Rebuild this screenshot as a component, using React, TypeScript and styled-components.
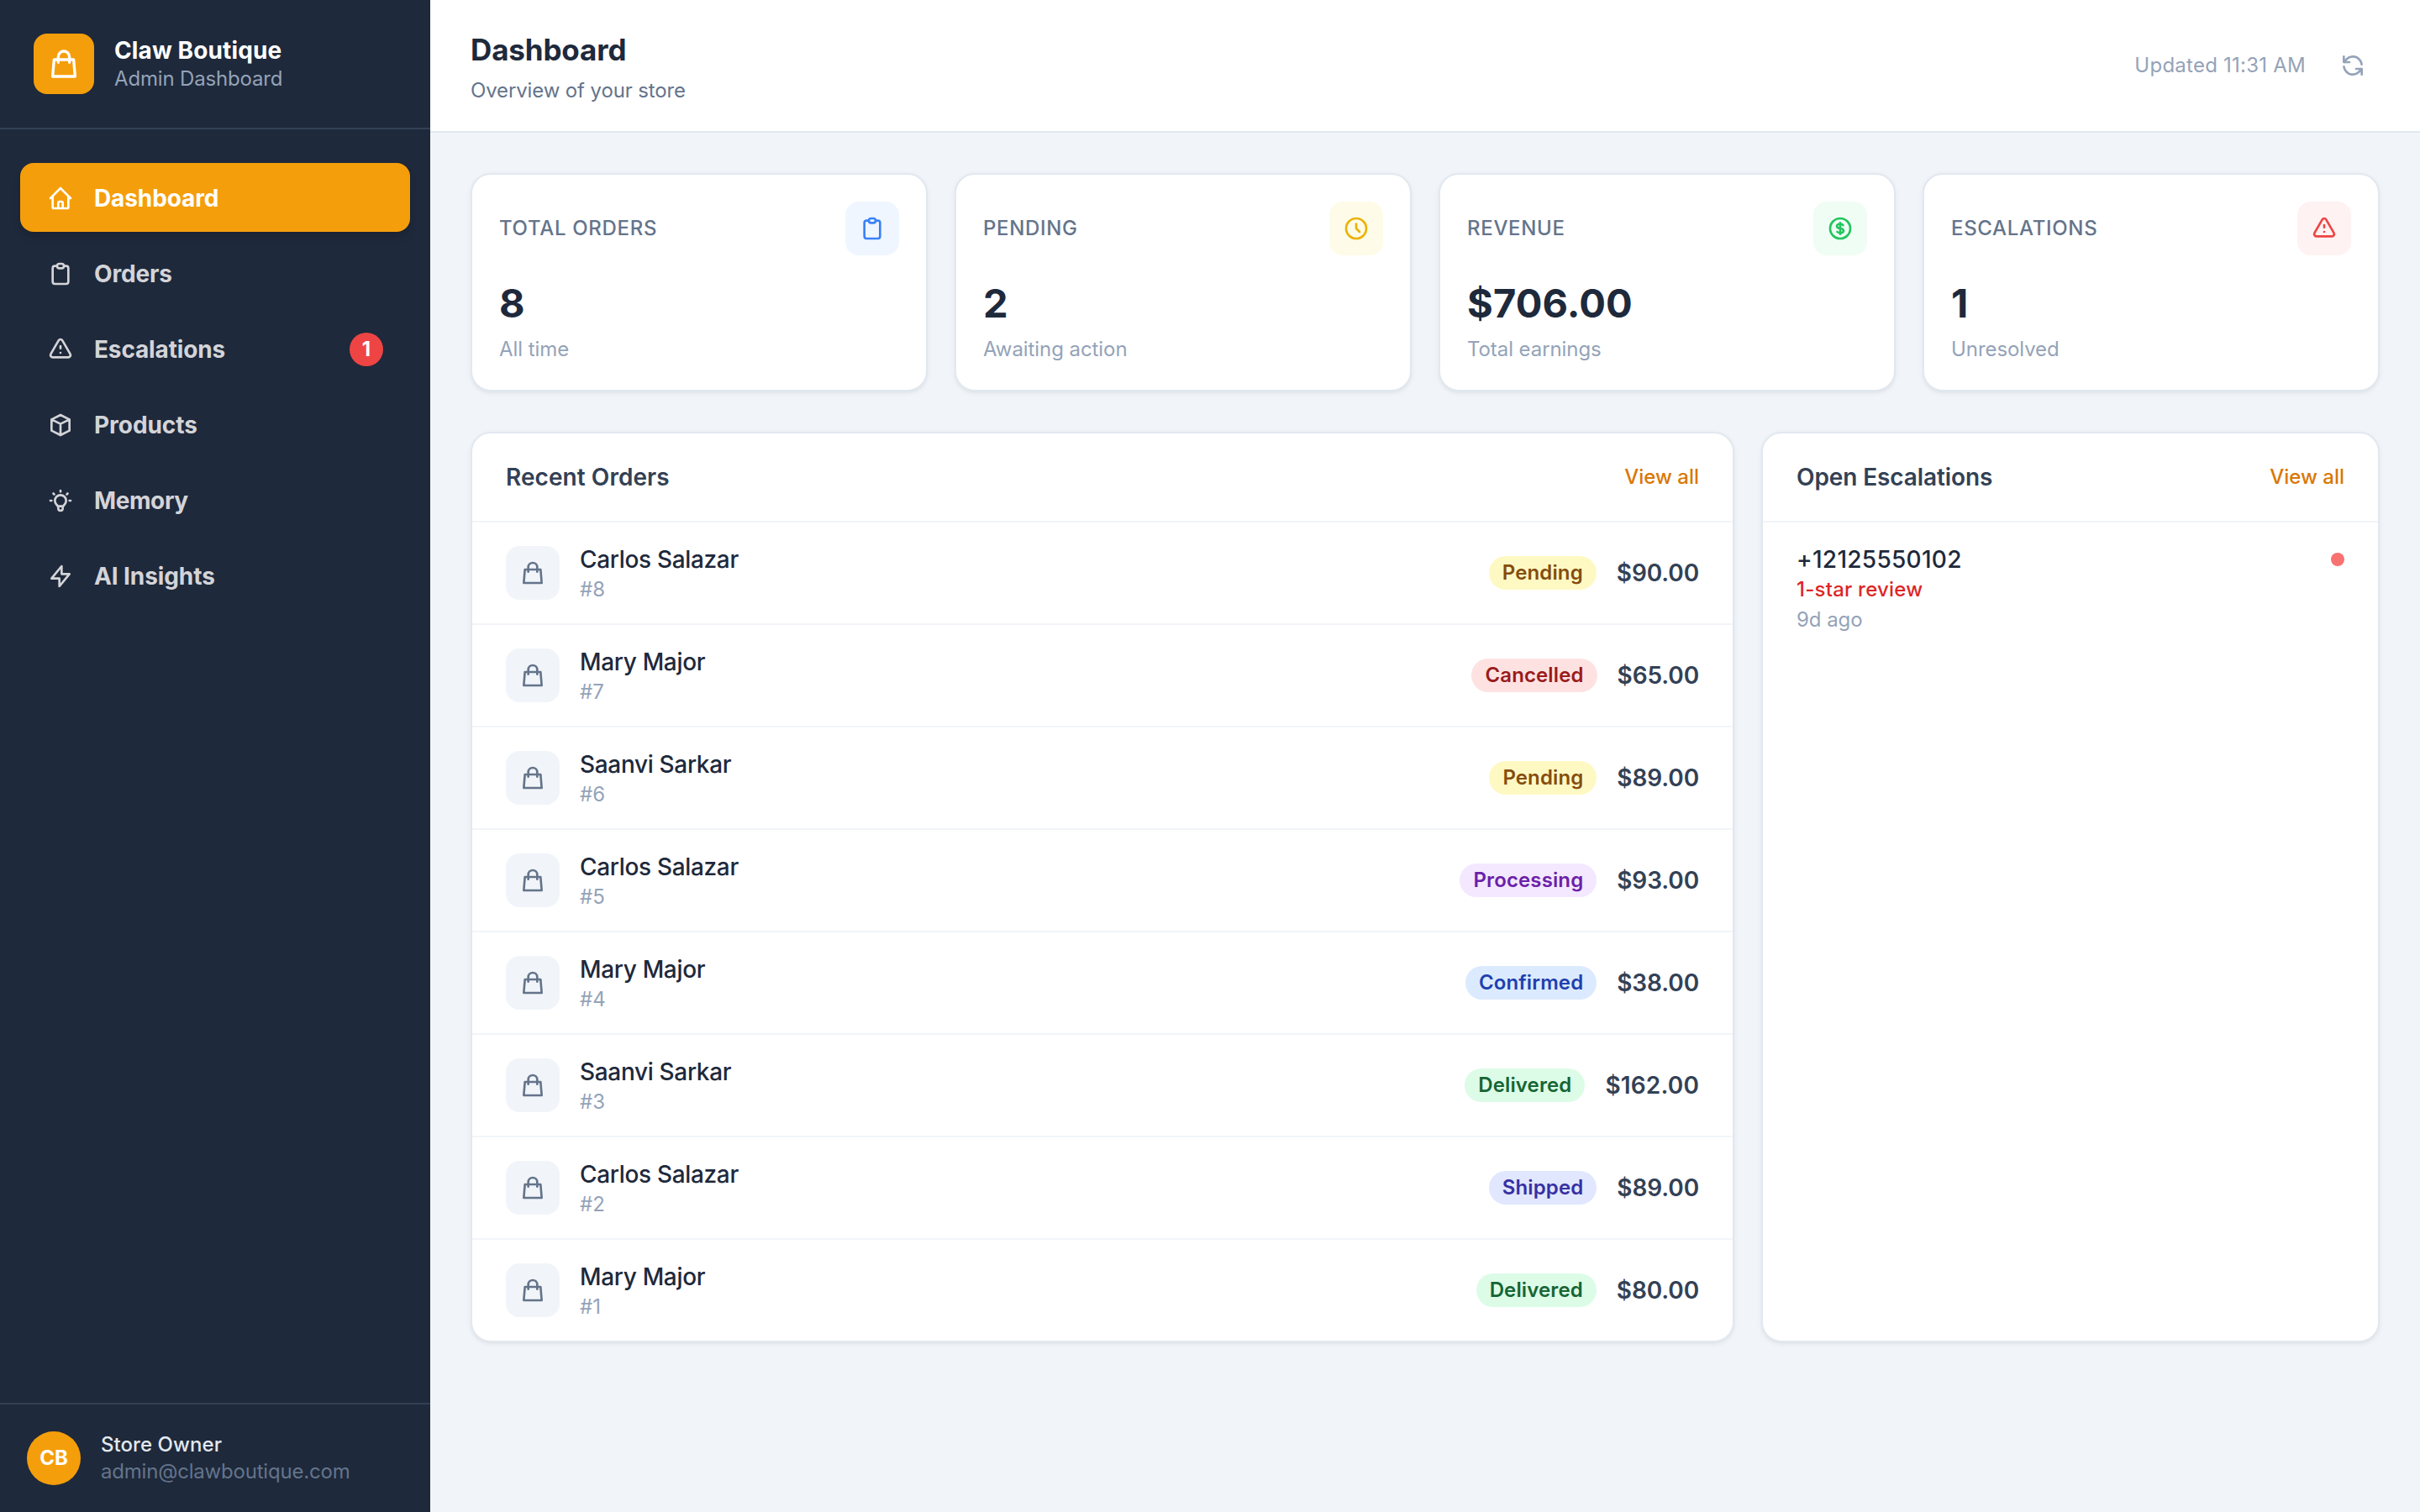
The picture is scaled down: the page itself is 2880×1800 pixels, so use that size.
import React from 'react';
import styled, { createGlobalStyle } from 'styled-components';

const GlobalStyle = createGlobalStyle`
  *, *::before, *::after { box-sizing: border-box; }
  body {
    margin: 0;
    background: #f1f5f9;
    color: #1e293b;
    font-family: Inter, "Liberation Sans", sans-serif;
    -webkit-font-smoothing: antialiased;
  }
  h1, h2, p { margin: 0; }
`;

/* ---------- icons ---------- */

const iconPaths = {
  bag: 'M16 11V7a4 4 0 00-8 0v4M5 9h14l1 12H4L5 9z',
  home: 'M3 12l2-2m0 0l7-7 7 7M5 10v10a1 1 0 001 1h3m10-11l2 2m-2-2v10a1 1 0 01-1 1h-3m-6 0a1 1 0 001-1v-4a1 1 0 011-1h2a1 1 0 011 1v4a1 1 0 001 1m-6 0h6',
  clipboard:
    'M9 5H7a2 2 0 00-2 2v12a2 2 0 002 2h10a2 2 0 002-2V7a2 2 0 00-2-2h-2M9 5a2 2 0 002 2h2a2 2 0 002-2M9 5a2 2 0 012-2h2a2 2 0 012 2',
  warning:
    'M12 9v2m0 4h.01m-6.938 4h13.856c1.54 0 2.502-1.667 1.732-3L13.732 4c-.77-1.333-2.694-1.333-3.464 0L3.34 16c-.77 1.333.192 3 1.732 3z',
  cube: 'M20 7l-8-4-8 4m16 0l-8 4m8-4v10l-8 4m0-10L4 7m8 4v10M4 7v10l8 4',
  bulb: 'M9.663 17h4.673M12 3v1m6.364 1.636l-.707.707M21 12h-1M4 12H3m3.343-5.657l-.707-.707m2.828 9.9a5 5 0 117.072 0l-.548.547A3.374 3.374 0 0014 18.469V19a2 2 0 11-4 0v-.531c0-.895-.356-1.754-.988-2.386l-.548-.547z',
  bolt: 'M13 10V3L4 14h7v7l9-11h-7z',
  clock: 'M12 8v4l3 3m6-3a9 9 0 11-18 0 9 9 0 0118 0z',
  dollar:
    'M12 8c-1.657 0-3 .895-3 2s1.343 2 3 2 3 .895 3 2-1.343 2-3 2m0-8c1.11 0 2.08.402 2.599 1M12 8V7m0 1v8m0 0v1m0-1c-1.11 0-2.08-.402-2.599-1M21 12a9 9 0 11-18 0 9 9 0 0118 0z',
  refresh:
    'M4 4v5h.582m15.356 2A8.001 8.001 0 004.582 9m0 0H9m11 11v-5h-.581m0 0a8.003 8.003 0 01-15.357-2m15.357 2H15',
};

type IconName = keyof typeof iconPaths;

const Svg = styled.svg<{ $size: number }>`
  display: block;
  flex: none;
  width: ${(p) => p.$size}px;
  height: ${(p) => p.$size}px;
  fill: none;
  stroke: currentColor;
  stroke-width: 2;
  stroke-linecap: round;
  stroke-linejoin: round;
`;

const Icon = ({ name, size = 32 }: { name: IconName; size?: number }) => (
  <Svg $size={size} viewBox="0 0 24 24" aria-hidden="true">
    <path d={iconPaths[name]} />
  </Svg>
);

/* ---------- shell ---------- */

const Shell = styled.div`
  display: flex;
  height: 1800px;
`;

const Sidebar = styled.aside`
  flex: none;
  display: flex;
  flex-direction: column;
  width: 512px;
  background: #1e293b;
`;

const Brand = styled.div`
  display: flex;
  align-items: center;
  gap: 24px;
  padding: 40px;
  border-bottom: 2px solid #334155;
`;

const BrandMark = styled.div`
  display: grid;
  place-items: center;
  width: 72px;
  height: 72px;
  border-radius: 16px;
  background: #f59e0b;
  color: #fff;
`;

const BrandName = styled.p`
  font-size: 28px;
  font-weight: 700;
  line-height: 36px;
  letter-spacing: 0.12px;
  color: #fff;
`;

const BrandNote = styled.p`
  font-size: 24px;
  line-height: 32px;
  letter-spacing: -0.17px;
  color: #94a3b8;
`;

const Nav = styled.nav`
  flex: 1;
  display: flex;
  flex-direction: column;
  gap: 8px;
  padding: 40px 24px;
`;

const NavItem = styled.a<{ $active?: boolean }>`
  display: flex;
  align-items: center;
  gap: 24px;
  height: 82px;
  padding: 21px 32px 19px;
  border-radius: 16px;
  font-size: 28px;
  font-weight: 650;
  line-height: 42px;
  background: ${(p) => (p.$active ? '#f59e0b' : 'transparent')};
  color: ${(p) => (p.$active ? '#fff' : '#d4d4d8')};
  box-shadow: ${(p) =>
    p.$active ? '0 8px 12px -2px rgba(0, 0, 0, 0.1), 0 4px 8px -4px rgba(0, 0, 0, 0.1)' : 'none'};
`;

const NavLabel = styled.span<{ $tracking: number }>`
  flex: 1;
  letter-spacing: ${(p) => p.$tracking}px;
`;

const NavBadge = styled.span`
  width: 40px;
  height: 40px;
  border-radius: 50%;
  background: #ef4444;
  color: #fff;
  font-size: 24px;
  font-weight: 700;
  line-height: 39px;
  text-align: center;
`;

const Account = styled.div`
  display: flex;
  align-items: center;
  gap: 24px;
  padding: 32px;
  border-top: 2px solid #334155;
`;

const Avatar = styled.div`
  width: 64px;
  height: 64px;
  border-radius: 50%;
  background: #f59e0b;
  color: #fff;
  font-size: 24px;
  font-weight: 700;
  line-height: 63px;
  text-align: center;
`;

const AccountName = styled.p`
  font-size: 24px;
  font-weight: 500;
  line-height: 31px;
  letter-spacing: 0.06px;
  color: #e2e8f0;
`;

const AccountMail = styled.p`
  font-size: 24px;
  line-height: 33px;
  letter-spacing: -0.2px;
  color: #64748b;
`;

/* ---------- main column ---------- */

const Main = styled.main`
  flex: 1;
  min-width: 0;
`;

const TopBar = styled.header`
  display: flex;
  align-items: center;
  justify-content: space-between;
  height: 158px;
  padding: 0 48px;
  background: #fff;
  border-bottom: 2px solid #e2e8f0;
`;

const PageTitle = styled.h1`
  font-size: 35px;
  font-weight: 650;
  line-height: 60px;
  letter-spacing: -0.15px;
`;

const PageNote = styled.p`
  font-size: 24px;
  line-height: 38px;
  letter-spacing: -0.13px;
  color: #64748b;
`;

const Status = styled.div`
  display: flex;
  align-items: center;
  gap: 24px;
  font-size: 24px;
  line-height: 36px;
  letter-spacing: 0.24px;
  color: #94a3b8;
`;

const RefreshButton = styled.button`
  display: block;
  padding: 16px;
  border: 0;
  border-radius: 16px;
  background: none;
  color: inherit;
`;

const Content = styled.div`
  display: grid;
  gap: 48px;
  padding: 48px;
`;

const StatGrid = styled.section`
  display: grid;
  grid-template-columns: repeat(4, 1fr);
  gap: 32px;
`;

const Card = styled.article`
  background: #fff;
  border: 2px solid #e2e8f0;
  border-radius: 24px;
  box-shadow: 0 2px 6px rgba(0, 0, 0, 0.06), 0 2px 4px -2px rgba(0, 0, 0, 0.06);
`;

const StatCard = styled(Card)`
  padding: 32px;
`;

const StatHead = styled.div`
  display: flex;
  align-items: center;
  justify-content: space-between;
  margin-bottom: 28px;
`;

const StatLabel = styled.span`
  font-size: 24px;
  font-weight: 500;
  line-height: 36px;
  letter-spacing: 0.68px;
  text-transform: uppercase;
  color: #64748b;
`;

const IconTile = styled.div<{ $bg: string; $fg: string }>`
  flex: none;
  display: grid;
  place-items: center;
  width: 64px;
  height: 64px;
  border-radius: 16px;
  background: ${(p) => p.$bg};
  color: ${(p) => p.$fg};
`;

const StatValue = styled.p`
  font-size: 47px;
  font-weight: 700;
  line-height: 57px;
  letter-spacing: 0.15px;
`;

const StatNote = styled.p`
  margin-top: 10px;
  font-size: 24px;
  line-height: 33px;
  letter-spacing: -0.07px;
  color: #94a3b8;
`;

const PanelGrid = styled.section`
  display: grid;
  grid-template-columns: 1504fr 736fr;
  gap: 32px;
`;

const PanelHead = styled.div`
  display: flex;
  align-items: center;
  justify-content: space-between;
  height: 106px;
  padding: 0 40px;
  border-bottom: 2px solid #f1f5f9;
`;

const PanelTitle = styled.h2<{ $tracking: number }>`
  font-size: 28px;
  font-weight: 600;
  line-height: 42px;
  letter-spacing: ${(p) => p.$tracking}px;
  color: #334155;
`;

const PanelLink = styled.a`
  font-size: 24px;
  font-weight: 500;
  line-height: 36px;
  color: #d97706;
`;

const OrderRow = styled.div`
  display: flex;
  align-items: center;
  gap: 24px;
  padding: 24px 40px;
  & + & {
    border-top: 2px solid #f1f5f9;
  }
`;

const Details = styled.div`
  flex: 1;
`;

const Primary = styled.p<{ $tracking: number }>`
  font-size: 28px;
  font-weight: 500;
  line-height: 40px;
  letter-spacing: ${(p) => p.$tracking}px;
`;

const OrderNumber = styled.p`
  font-size: 24px;
  line-height: 32px;
  letter-spacing: 0.1px;
  color: #94a3b8;
`;

const badgeTones = {
  Pending: ['#fef9c3', '#854d0e'],
  Cancelled: ['#fee2e2', '#991b1b'],
  Processing: ['#f3e8ff', '#6b21a8'],
  Confirmed: ['#dbeafe', '#1e40af'],
  Delivered: ['#dcfce7', '#166534'],
  Shipped: ['#e0e7ff', '#3730a3'],
};

type OrderStatus = keyof typeof badgeTones;

const StatusBadge = styled.span<{ $status: OrderStatus }>`
  height: 40px;
  padding: 0 16px;
  border-radius: 20px;
  font-size: 24px;
  font-weight: 600;
  line-height: 39px;
  letter-spacing: 0.12px;
  background: ${(p) => badgeTones[p.$status][0]};
  color: ${(p) => badgeTones[p.$status][1]};
`;

const Price = styled.span<{ $wide: boolean }>`
  font-size: 28px;
  font-weight: 600;
  line-height: 42px;
  letter-spacing: ${(p) => (p.$wide ? 0.15 : -0.12)}px;
  color: #334155;
`;

const EscalationRow = styled.div`
  display: flex;
  align-items: flex-start;
  padding: 24px 40px;
`;

const Reason = styled.p`
  font-size: 24px;
  font-weight: 500;
  line-height: 32px;
  letter-spacing: 0.22px;
  color: #dc2626;
`;

const Age = styled.p`
  margin-top: 4px;
  font-size: 24px;
  line-height: 31px;
  letter-spacing: -0.05px;
  color: #94a3b8;
`;

const Dot = styled.span`
  width: 16px;
  height: 16px;
  margin-top: 12px;
  border-radius: 50%;
  background: #f87171;
`;

/* ---------- data ---------- */

const navItems: { icon: IconName; label: string; tracking: number; active?: boolean; badge?: number }[] = [
  { icon: 'home', label: 'Dashboard', tracking: -0.1, active: true },
  { icon: 'clipboard', label: 'Orders', tracking: -0.15 },
  { icon: 'warning', label: 'Escalations', tracking: -0.15, badge: 1 },
  { icon: 'cube', label: 'Products', tracking: -0.05 },
  { icon: 'bulb', label: 'Memory', tracking: -0.4 },
  { icon: 'bolt', label: 'AI Insights', tracking: -0.1 },
];

const stats: { label: string; value: string; note: string; icon: IconName; bg: string; fg: string }[] = [
  { label: 'Total Orders', value: '8', note: 'All time', icon: 'clipboard', bg: '#eff6ff', fg: '#3b82f6' },
  { label: 'Pending', value: '2', note: 'Awaiting action', icon: 'clock', bg: '#fefce8', fg: '#eab308' },
  { label: 'Revenue', value: '$706.00', note: 'Total earnings', icon: 'dollar', bg: '#f0fdf4', fg: '#22c55e' },
  { label: 'Escalations', value: '1', note: 'Unresolved', icon: 'warning', bg: '#fef2f2', fg: '#ef4444' },
];

const orders: { id: number; name: string; status: OrderStatus; total: string }[] = [
  { id: 8, name: 'Carlos Salazar', status: 'Pending', total: '$90.00' },
  { id: 7, name: 'Mary Major', status: 'Cancelled', total: '$65.00' },
  { id: 6, name: 'Saanvi Sarkar', status: 'Pending', total: '$89.00' },
  { id: 5, name: 'Carlos Salazar', status: 'Processing', total: '$93.00' },
  { id: 4, name: 'Mary Major', status: 'Confirmed', total: '$38.00' },
  { id: 3, name: 'Saanvi Sarkar', status: 'Delivered', total: '$162.00' },
  { id: 2, name: 'Carlos Salazar', status: 'Shipped', total: '$89.00' },
  { id: 1, name: 'Mary Major', status: 'Delivered', total: '$80.00' },
];

export default function App() {
  return (
    <>
      <GlobalStyle />
      <Shell>
        <Sidebar>
          <Brand>
            <BrandMark>
              <Icon name="bag" size={40} />
            </BrandMark>
            <div>
              <BrandName>Claw Boutique</BrandName>
              <BrandNote>Admin Dashboard</BrandNote>
            </div>
          </Brand>
          <Nav>
            {navItems.map((item) => (
              <NavItem key={item.label} $active={item.active}>
                <Icon name={item.icon} />
                <NavLabel $tracking={item.tracking}>{item.label}</NavLabel>
                {item.badge && <NavBadge>{item.badge}</NavBadge>}
              </NavItem>
            ))}
          </Nav>
          <Account>
            <Avatar>CB</Avatar>
            <div>
              <AccountName>Store Owner</AccountName>
              <AccountMail>admin@clawboutique.com</AccountMail>
            </div>
          </Account>
        </Sidebar>

        <Main>
          <TopBar>
            <div>
              <PageTitle>Dashboard</PageTitle>
              <PageNote>Overview of your store</PageNote>
            </div>
            <Status>
              <span>Updated 11:31 AM</span>
              <RefreshButton aria-label="Refresh">
                <Icon name="refresh" />
              </RefreshButton>
            </Status>
          </TopBar>

          <Content>
            <StatGrid>
              {stats.map((s) => (
                <StatCard key={s.label}>
                  <StatHead>
                    <StatLabel>{s.label}</StatLabel>
                    <IconTile $bg={s.bg} $fg={s.fg}>
                      <Icon name={s.icon} />
                    </IconTile>
                  </StatHead>
                  <StatValue>{s.value}</StatValue>
                  <StatNote>{s.note}</StatNote>
                </StatCard>
              ))}
            </StatGrid>

            <PanelGrid>
              <Card>
                <PanelHead>
                  <PanelTitle $tracking={0.06}>Recent Orders</PanelTitle>
                  <PanelLink>View all</PanelLink>
                </PanelHead>
                {orders.map((o) => (
                  <OrderRow key={o.id}>
                    <IconTile $bg="#f1f5f9" $fg="#64748b">
                      <Icon name="bag" />
                    </IconTile>
                    <Details>
                      <Primary $tracking={-0.33}>{o.name}</Primary>
                      <OrderNumber>#{o.id}</OrderNumber>
                    </Details>
                    <StatusBadge $status={o.status}>{o.status}</StatusBadge>
                    <Price $wide={o.total.length > 6}>{o.total}</Price>
                  </OrderRow>
                ))}
              </Card>

              <Card>
                <PanelHead>
                  <PanelTitle $tracking={-0.1}>Open Escalations</PanelTitle>
                  <PanelLink>View all</PanelLink>
                </PanelHead>
                <EscalationRow>
                  <Details>
                    <Primary $tracking={0.28}>+12125550102</Primary>
                    <Reason>1-star review</Reason>
                    <Age>9d ago</Age>
                  </Details>
                  <Dot />
                </EscalationRow>
              </Card>
            </PanelGrid>
          </Content>
        </Main>
      </Shell>
    </>
  );
}
